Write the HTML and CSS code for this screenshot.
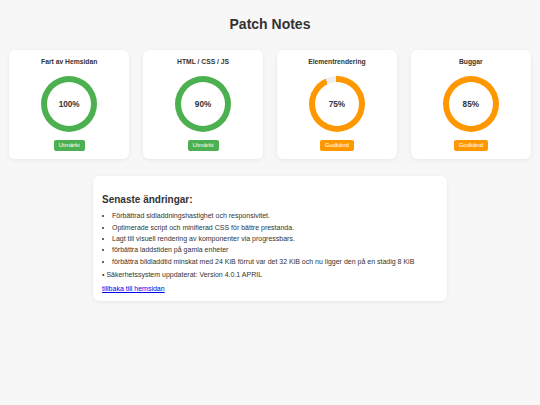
FILE: index.html
```html
<!DOCTYPE html>
<html lang="sv">
<head>
<meta charset="utf-8">
<title>Patch Notes</title>
<link rel="stylesheet" href="styles.css">
</head>
<body>
  <h1 class="page-title">Patch Notes</h1>
  <div class="cards">
    <div class="card">
      <div class="card-title">Fart av Hemsidan</div>
      <div class="ring ring-green"><div class="ring-inner">100%</div></div>
      <span class="badge badge-green">Utmärkt</span>
    </div>
    <div class="card">
      <div class="card-title">HTML / CSS / JS</div>
      <div class="ring ring-green"><div class="ring-inner">90%</div></div>
      <span class="badge badge-green">Utmärkt</span>
    </div>
    <div class="card">
      <div class="card-title">Elementrendering</div>
      <div class="ring ring-orange-gap"><div class="ring-inner">75%</div></div>
      <span class="badge badge-orange">Godkänd</span>
    </div>
    <div class="card">
      <div class="card-title">Buggar</div>
      <div class="ring ring-orange"><div class="ring-inner">85%</div></div>
      <span class="badge badge-orange">Godkänd</span>
    </div>
  </div>
  <div class="notes">
    <h2 class="notes-title">Senaste ändringar:</h2>
    <ul class="notes-list">
      <li>Förbättrad sidladdningshastighet och responsivitet.</li>
      <li>Optimerade script och minifierad CSS för bättre prestanda.</li>
      <li>Lagt till visuell rendering av komponenter via progressbars.</li>
      <li>förbättra laddstiden på gamla enheter</li>
      <li>förbättra bildladdtid minskat med 24 KiB förrut var det 32 KiB och nu ligger den på en stadig 8 KiB</li>
    </ul>
    <p class="notes-extra">• Säkerhetssystem uppdaterat: Version 4.0.1 APRIL</p>
    <a class="back-link" href="#">tillbaka till hemsidan</a>
  </div>
</body>
</html>
```

FILE: styles.css
```css
html, body {
  margin: 0;
  padding: 0;
}
body {
  background: #f7f7f7;
  font-family: "Liberation Sans", Arial, sans-serif;
  color: #333;
  width: 540px;
  height: 405px;
}
.page-title {
  margin: 0;
  padding-top: 16px;
  font-size: 14px;
  line-height: 16px;
  font-weight: bold;
  text-align: center;
  color: #333;
}
.cards {
  display: grid;
  grid-template-columns: repeat(4, 1fr);
  gap: 13.5px;
  padding: 0 9px;
  margin-top: 18px;
}
.card {
  background: #fff;
  border-radius: 6px;
  box-shadow: 0 1px 4px rgba(0, 0, 0, 0.07);
  padding: 7.5px 6px 8px;
  display: flex;
  flex-direction: column;
  align-items: center;
}
.card-title {
  font-size: 6.75px;
  line-height: 8px;
  font-weight: bold;
  color: #333;
}
.ring {
  margin-top: 10.5px;
  width: 56px;
  height: 56px;
  border-radius: 50%;
  display: flex;
  align-items: center;
  justify-content: center;
}
.ring-green {
  background: #4caf50;
}
.ring-orange {
  background: #ff9800;
}
.ring-orange-gap {
  background: conic-gradient(#ff9800 0deg 335deg, #eeeeee 335deg 357deg, #ff9800 357deg 360deg);
}
.ring-inner {
  width: 44px;
  height: 44px;
  border-radius: 50%;
  background: #fff;
  display: flex;
  align-items: center;
  justify-content: center;
  font-size: 8.2px;
  font-weight: bold;
  color: #333;
}
.badge {
  margin-top: 8px;
  font-size: 6px;
  line-height: 7px;
  padding: 2px 5px;
  border-radius: 2px;
  color: #fff;
}
.badge-green {
  background: #4caf50;
}
.badge-orange {
  background: #ff9800;
}
.notes {
  width: 336px;
  margin: 17px auto 0;
  background: #fff;
  border-radius: 6px;
  box-shadow: 0 1px 4px rgba(0, 0, 0, 0.07);
  padding: 9px 9px 7px;
}
.notes-title {
  margin: 9px 0 4.4px;
  font-size: 10px;
  line-height: 12px;
  font-weight: bold;
  color: #333;
}
.notes-list {
  margin: 0;
  padding: 0;
  list-style: disc inside;
}
.notes-list li {
  font-size: 7px;
  line-height: 11.3px;
  color: #333;
}
.notes-extra {
  margin: 2.5px 0 0;
  font-size: 7px;
  line-height: 11.2px;
  color: #333;
}
.back-link {
  display: block;
  width: max-content;
  margin-top: 2px;
  font-size: 7px;
  line-height: 11.2px;
  color: #0000ee;
  text-decoration: underline;
}
```
